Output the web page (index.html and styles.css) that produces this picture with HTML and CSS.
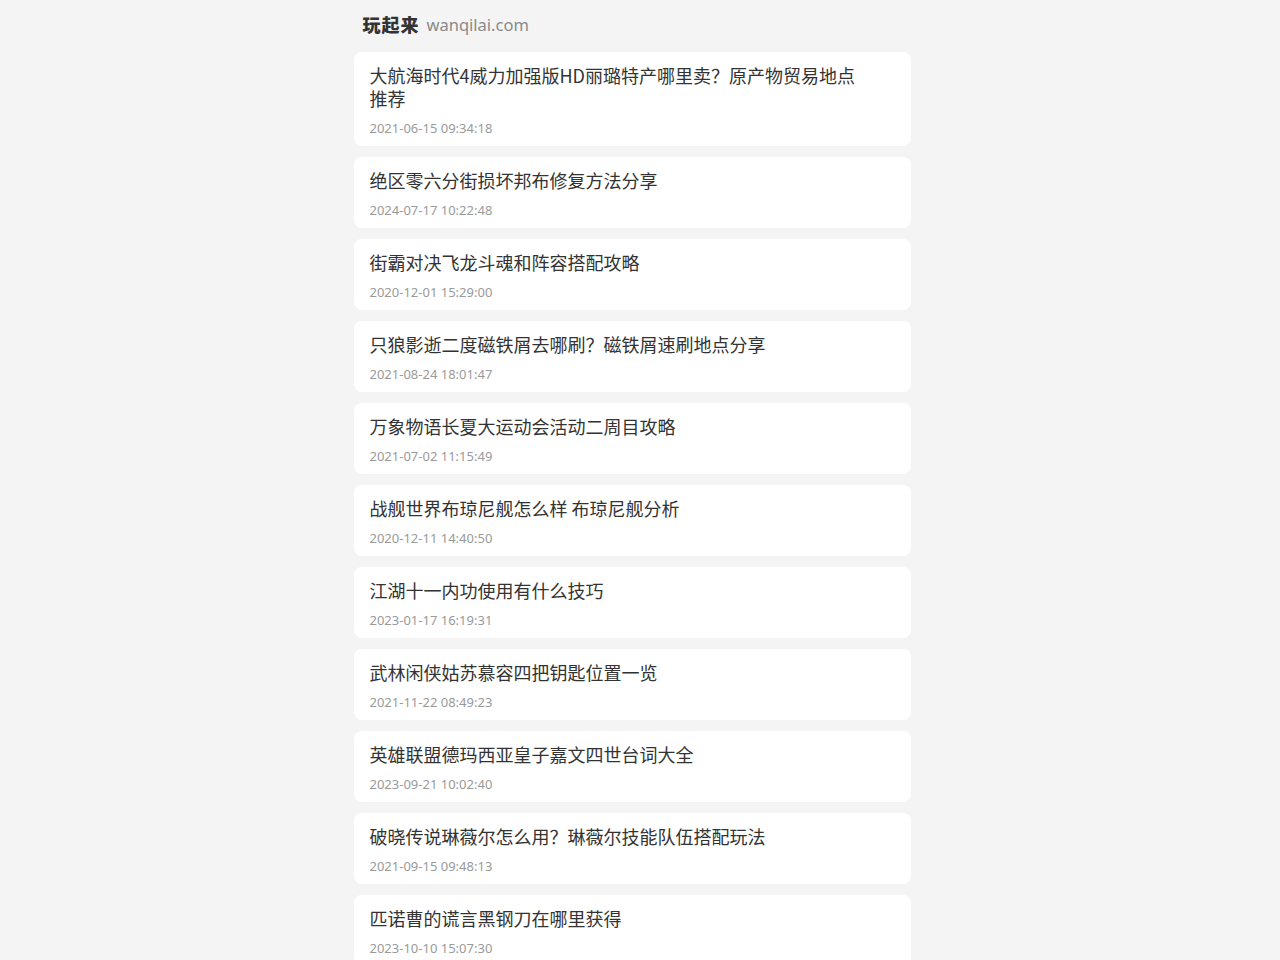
FILE: index.html
```html
<!DOCTYPE html>
<html lang="zh-CN">

<head>
    <meta charset="UTF-8">
    <title>玩起来 - wanqilai.com</title>
    <link rel="stylesheet" href="styles.css">
</head>

<body>
    <div class="page">
        <header class="site-header">
            <span class="logo">玩起来</span>
            <span class="domain">wanqilai.com</span>
        </header>

        <ul class="article-list">
            <li class="article-card">
                <a class="article-title" href="#">大航海时代4威力加强版HD丽璐特产哪里卖？原产物贸易地点推荐</a>
                <div class="article-date">2021-06-15 09:34:18</div>
            </li>
            <li class="article-card">
                <a class="article-title" href="#">绝区零六分街损坏邦布修复方法分享</a>
                <div class="article-date">2024-07-17 10:22:48</div>
            </li>
            <li class="article-card">
                <a class="article-title" href="#">街霸对决飞龙斗魂和阵容搭配攻略</a>
                <div class="article-date">2020-12-01 15:29:00</div>
            </li>
            <li class="article-card">
                <a class="article-title" href="#">只狼影逝二度磁铁屑去哪刷？磁铁屑速刷地点分享</a>
                <div class="article-date">2021-08-24 18:01:47</div>
            </li>
            <li class="article-card">
                <a class="article-title" href="#">万象物语长夏大运动会活动二周目攻略</a>
                <div class="article-date">2021-07-02 11:15:49</div>
            </li>
            <li class="article-card">
                <a class="article-title" href="#">战舰世界布琼尼舰怎么样 布琼尼舰分析</a>
                <div class="article-date">2020-12-11 14:40:50</div>
            </li>
            <li class="article-card">
                <a class="article-title" href="#">江湖十一内功使用有什么技巧</a>
                <div class="article-date">2023-01-17 16:19:31</div>
            </li>
            <li class="article-card">
                <a class="article-title" href="#">武林闲侠姑苏慕容四把钥匙位置一览</a>
                <div class="article-date">2021-11-22 08:49:23</div>
            </li>
            <li class="article-card">
                <a class="article-title" href="#">英雄联盟德玛西亚皇子嘉文四世台词大全</a>
                <div class="article-date">2023-09-21 10:02:40</div>
            </li>
            <li class="article-card">
                <a class="article-title" href="#">破晓传说琳薇尔怎么用？琳薇尔技能队伍搭配玩法</a>
                <div class="article-date">2021-09-15 09:48:13</div>
            </li>
            <li class="article-card">
                <a class="article-title" href="#">匹诺曹的谎言黑钢刀在哪里获得</a>
                <div class="article-date">2023-10-10 15:07:30</div>
            </li>
        </ul>
    </div>
</body>

</html>
```

FILE: styles.css
```css
:root {
    --bg-color: #f4f4f4;
    --card-color: #ffffff;
    --title-color: #333333;
    --muted-color: #9a9a9a;
    --logo-color: #333333;
}

body {
    margin: 0;
    padding: 0 16px 12px 0;
    background-color: var(--bg-color);
    font-family: "Noto Sans CJK SC", "Noto Sans", sans-serif;
    color: var(--title-color);
}

.page {
    width: 557px;
    margin: 0 auto;
}

.site-header {
    height: 48px;
    margin-bottom: 4px;
    display: flex;
    align-items: center;
    padding-left: 9px;
    gap: 7px;
}

.logo {
    font-size: 18px;
    font-weight: 900;
    letter-spacing: 1px;
    color: var(--logo-color);
}

.domain {
    font-family: "Noto Sans", sans-serif;
    font-size: 16.5px;
    color: #8a8a8a;
}

.article-list {
    list-style: none;
    margin: 0;
    padding: 0;
    display: flex;
    flex-direction: column;
    gap: 11px;
}

.article-card {
    background: var(--card-color);
    border-radius: 8px;
    padding: 12px 48px 9px 16px;
}

.article-title {
    display: block;
    font-size: 18px;
    line-height: 23px;
    color: var(--title-color);
    text-decoration: none;
}

.article-date {
    margin-top: 9px;
    font-family: "Noto Sans", sans-serif;
    font-size: 13px;
    line-height: 18px;
    color: var(--muted-color);
}
```
